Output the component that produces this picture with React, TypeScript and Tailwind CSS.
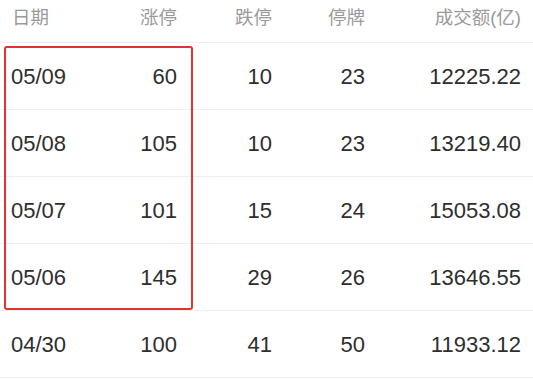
import React from "react";

const rows = [
  ["05/09", "60", "10", "23", "12225.22"],
  ["05/08", "105", "10", "23", "13219.40"],
  ["05/07", "101", "15", "24", "15053.08"],
  ["05/06", "145", "29", "26", "13646.55"],
  ["04/30", "100", "41", "50", "11933.12"],
];

const cols = "grid grid-cols-[100px_77px_95px_93px_156px]";

export default function App() {
  return (
    <div className="relative w-[533px] h-[380px] bg-white overflow-hidden" style={{ fontFamily: '"Liberation Sans", Arial, "Noto Sans CJK SC", sans-serif' }}>
      <div className={`${cols} h-[43px] items-center pb-[6px] border-b border-[#efefef] text-[18.5px] text-[#9a9a9a]`} style={{ fontFamily: '"Liberation Sans", "Noto Sans CJK SC", sans-serif' }}>
        <div className="pl-[12px]">日期</div>
        <div className="text-right">涨停</div>
        <div className="text-right">跌停</div>
        <div className="text-right">停牌</div>
        <div className="text-right pr-[-1px]">成交额(亿)</div>
      </div>
      {rows.map((r) => (
        <div key={r[0]} className={`${cols} h-[67px] items-center pt-[1px] border-b border-[#efefef] text-[22px] text-[#2e2e2e]`}>
          <div className="pl-[11px]">{r[0]}</div>
          <div className="text-right">{r[1]}</div>
          <div className="text-right">{r[2]}</div>
          <div className="text-right">{r[3]}</div>
          <div className="text-right">{r[4]}</div>
        </div>
      ))}
      <div className="absolute left-[4px] top-[46px] w-[189px] h-[264px] border-2 border-[#e8302c] rounded-[3px]" />
    </div>
  );
}
